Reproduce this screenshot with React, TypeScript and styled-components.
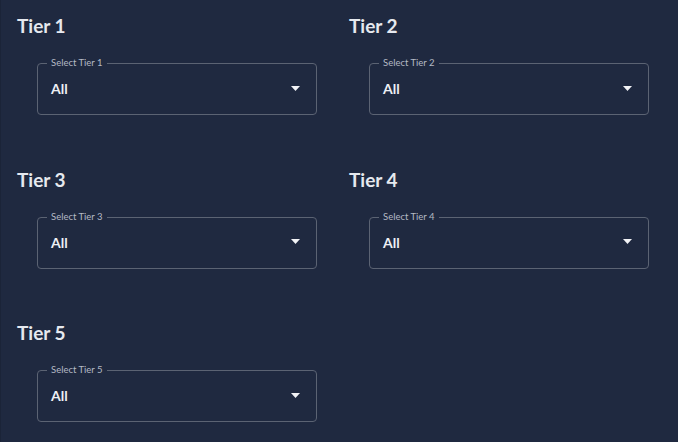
import React from "react";
import styled, { createGlobalStyle } from "styled-components";

const Global = createGlobalStyle`
  html, body { margin: 0; padding: 0; background: #1f2940; }
  body { font-family: Lato, "Noto Sans", sans-serif; }
`;

const Page = styled.div`
  width: 678px;
  height: 442px;
  box-sizing: border-box;
  background: #1f2940;
  border-left: 1px solid #1b2438;
  padding: 14px 0 0 16px;
  display: grid;
  grid-template-columns: 332px 332px;
  row-gap: 52.5px;
  align-content: start;
`;

const Cell = styled.section`
  display: flex;
  flex-direction: column;
`;

const Heading = styled.h2`
  margin: 0;
  font-size: 19px;
  line-height: 24px;
  font-weight: 700;
  color: #e6e9ef;
`;

const Field = styled.div`
  position: relative;
  margin: 25px 0 0 20px;
  width: 280px;
  height: 52px;
  box-sizing: border-box;
  border: 1px solid #5b6373;
  border-radius: 4px;
  display: flex;
  align-items: center;
  padding: 0 16px 0 13px;
`;

const Legend = styled.span`
  position: absolute;
  top: -8px;
  left: 9px;
  padding: 0 4px;
  background: #1f2940;
  font-size: 9.5px;
  line-height: 14px;
  color: #b4b9c4;
`;

const Value = styled.span`
  flex: 1;
  font-size: 14px;
  font-weight: 700;
  color: #eef0f4;
  margin-top: -1px;
`;

const Arrow = styled.svg`
  width: 9px;
  height: 5px;
  margin-top: -2px;
  fill: #f2f3f6;
`;

const tiers = [1, 2, 3, 4, 5];

export default function App() {
  return (
    <>
      <Global />
      <Page>
        {tiers.map((t) => (
          <Cell key={t}>
            <Heading>Tier {t}</Heading>
            <Field>
              <Legend>Select Tier {t}</Legend>
              <Value>All</Value>
              <Arrow viewBox="0 0 9 5">
                <path d="M0 0h9L4.5 5z" />
              </Arrow>
            </Field>
          </Cell>
        ))}
      </Page>
    </>
  );
}
